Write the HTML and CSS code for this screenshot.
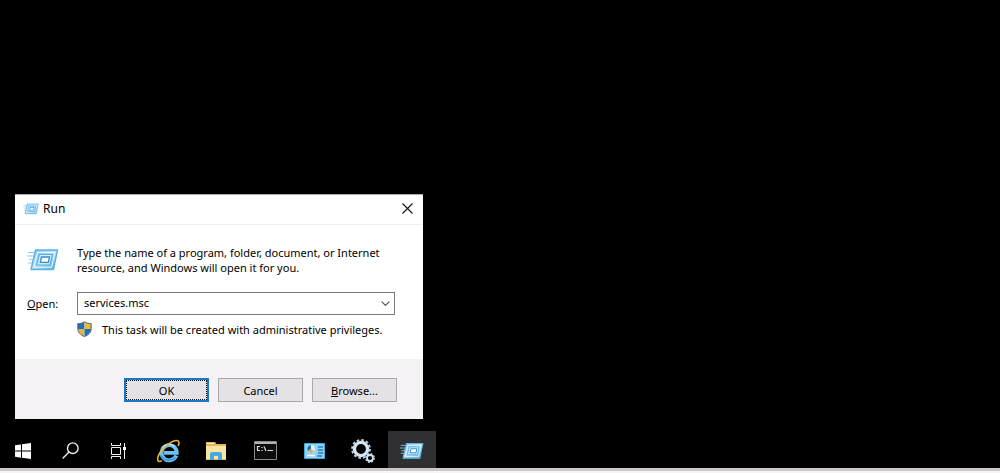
FILE: index.html
```html
<!DOCTYPE html>
<html lang="en">
<head>
<meta charset="utf-8">
<title>Run</title>
<link rel="stylesheet" href="styles.css">
</head>
<body>
<svg class="defs" aria-hidden="true">
  <defs>
    <linearGradient id="glass" x1="0" y1="0" x2="1" y2="1">
      <stop offset="0" stop-color="#7fc6ec"/><stop offset=".5" stop-color="#b5e0f6"/><stop offset="1" stop-color="#4aa6dd"/>
    </linearGradient>
    <symbol id="run" viewBox="0 0 32 24">
      <path d="M1 4.500h9M0 8h8M2 11.500h5M1 15h5" stroke="#8ccbed" stroke-width="1.100"/>
      <path d="M8.500 2H30.500L26.500 21.500H4z" fill="url(#glass)" stroke="#5fb3e2" stroke-width="1.400" stroke-linejoin="round"/>
      <path d="M10.500 4.300H28L24.600 19.200H6.900z" fill="none" stroke="#f0faff" stroke-width="1"/>
      <path d="M12.300 6.500H25.500L23 17H9.600z" fill="#d2eefa" stroke="#5aaee0" stroke-width="1.200"/>
      <path d="M14.500 9h8l-1.200 5.400h-8z" fill="#fff" stroke="#348fcd" stroke-width="1.300"/>
    </symbol>
  </defs>
</svg>
<main class="desktop">
  <form class="dialog" role="dialog" aria-labelledby="run-title">
    <header class="titlebar">
      <svg class="title-icon"><use href="#run"/></svg>
      <h1 class="title" id="run-title">Run</h1>
      <button class="close" type="button" aria-label="Close">
        <svg width="11" height="11" viewBox="0 0 11 11"><path d="M.5.5l10 10M10.500.5l-10 10" stroke="#111" stroke-width="1.100"/></svg>
      </button>
    </header>
    <div class="content">
      <svg class="run-icon"><use href="#run"/></svg>
      <p class="intro">Type the name of a program, folder, document, or Internet<br>resource, and Windows will open it for you.</p>
      <label class="open-label" for="open"><u>O</u>pen:</label>
      <div class="combo">
        <input class="combo-input" id="open" type="text" value="services.msc" spellcheck="false">
        <button class="combo-arrow" type="button" aria-label="Show list">
          <svg width="9" height="6" viewBox="0 0 9 6"><path d="M.7.7l3.800 3.800L8.300.7" fill="none" stroke="#555" stroke-width="1.200"/></svg>
        </button>
      </div>
      <p class="notice">
        <svg width="15" height="16" viewBox="0 0 15 16">
          <path d="M7.500 1C5.500 2.300 3.200 2.800 1 2.700V8h6.500z" fill="#1c6fc0"/>
          <path d="M7.500 1c2 1.300 4.300 1.800 6.500 1.700V8H7.500z" fill="#e8bd3a"/>
          <path d="M1 8h6.500v7.300C4 14 1.200 11.500 1 8z" fill="#e3b637"/>
          <path d="M14 8H7.500v7.300C11 14 13.800 11.500 14 8z" fill="#1c6fc0"/>
          <path d="M7.500.8C5.500 2.200 3.200 2.700.8 2.600V7.500c0 4 2.700 6.600 6.700 8 4-1.400 6.700-4 6.700-8V2.600C11.800 2.700 9.500 2.200 7.500.8z" fill="none" stroke="#4c5f70"/>
        </svg>
        <span>This task will be created with administrative privileges.</span>
      </p>
    </div>
    <footer class="actions">
      <button class="action action-default" type="button">OK</button>
      <button class="action" type="button">Cancel</button>
      <button class="action" type="button"><span><u>B</u>rowse...</span></button>
    </footer>
  </form>
</main>
<nav class="taskbar" aria-label="Taskbar">
  <div class="system">
    <button class="task" type="button" aria-label="Start">
      <svg width="16" height="16" viewBox="0 0 16 16" fill="#fff"><path d="M0 2.300l6-.9v6.200H0zM7 1.200L16 0v7.600H7zM0 8.500h6v6.200l-6-.9zM7 8.500h9V16l-9-1.200z"/></svg>
    </button>
    <button class="task" type="button" aria-label="Search">
      <svg width="17" height="17" viewBox="0 0 17 17" fill="none" stroke="#eee" stroke-width="1.400"><circle cx="10.800" cy="6.200" r="5.300"/><path d="M7 10L.6 16.400"/></svg>
    </button>
    <button class="task" type="button" aria-label="Task View">
      <svg width="17" height="16" viewBox="0 0 17 16" fill="none" stroke="#eee"><path d="M1.500 0v2.500h9V0M1.500 16v-2.500h9V16M14.500 0v16" /><path d="M1.500 4.500h9v7h-9z"/><path d="M13 4h3v3h-3z" fill="#fff" stroke="none"/></svg>
    </button>
  </div>
  <div class="pinned">
    <button class="task" type="button" aria-label="Internet Explorer">
      <svg width="23" height="24" viewBox="0 0 23 24" fill="none">
        <path d="M19.300 16.500A7.600 7.600 0 1 1 19.800 13.800H7" stroke="#69c3f2" stroke-width="3.800"/>
        <path d="M18.500 18.500A8.800 8.800 0 0 1 4.200 16.500" stroke="#2f97da" stroke-width="1.500"/>
        <path d="M5 9.500A8.300 8.300 0 0 1 18 7.500" stroke="#b5e6fb" stroke-width="1.400"/>
        <path d="M4.800 21.800C.5 24-.8 20.500 2.500 14.500 7 7.500 15 1.500 19.500 1.500c3 0 3 3 1.500 5.500" stroke="#e6b63c" stroke-width="1.600"/>
      </svg>
    </button>
    <button class="task" type="button" aria-label="File Explorer">
      <svg width="22" height="20" viewBox="0 0 22 20"><path d="M1 1h9l1.500 2H21v16H1z" fill="#e3b95c"/><path d="M2 2h7v1H2z" fill="#fff2b8"/><path d="M1 5h20v13H1z" fill="#fae6a2"/><path d="M5 19v-6.500l1.500-1.500h9l1.500 1.500V19h-4v-4H9v4z" fill="#4aa8de"/></svg>
    </button>
    <button class="task" type="button" aria-label="Command Prompt">
      <svg width="23" height="19" viewBox="0 0 23 19"><path d="M.5.5h22v18H.5z" fill="#0c0c0c" stroke="#888"/><path d="M1 1h21v2H1z" fill="#b4b4b4"/><path d="M6 5.500H3.500v4H6M8 6v1m0 2v1M10 5.500l2 4.500M13.500 9.500H19" fill="none" stroke="#ddd" stroke-width="1.200"/></svg>
    </button>
    <button class="task" type="button" aria-label="Control Panel">
      <svg width="21" height="16" viewBox="0 0 21 16"><path d="M.5.5h20v15H.5z" fill="#8fd3f3" stroke="#46a5da"/><circle cx="7" cy="6" r="3.900" fill="#e9f8ff"/><path d="M7 6V2.100A3.900 3.900 0 0 0 3.800 8.200z" fill="#1479bd"/><path d="M7 6l3.300 2A3.900 3.900 0 0 1 3.900 8.400z" fill="#dba868"/><path d="M14 4h5M14 7h5M14 10h5M13 13h5" stroke="#2b80b8" stroke-width="1.300"/><path d="M3 12.500h8" stroke="#fff" stroke-width="1.500"/></svg>
    </button>
    <button class="task" type="button" aria-label="Services">
      <svg width="24" height="24" viewBox="0 0 24 24" fill="none">
        <circle cx="10" cy="10" r="6.600" stroke="#d5e6f3" stroke-width="3.400"/><circle cx="10" cy="10" r="8.900" stroke="#bdd3e5" stroke-width="2" stroke-dasharray="2.600 2.060"/>
        <circle cx="19" cy="19" r="3" stroke="#d5e6f3" stroke-width="1.800"/><circle cx="19" cy="19" r="4.300" stroke="#bdd3e5" stroke-width="1.300" stroke-dasharray="1.900 1.480"/>
      </svg>
    </button>
    <button class="task task-active" type="button" aria-label="Run"><svg class="task-run"><use href="#run"/></svg></button>
  </div>
</nav>
<div class="screen-edge"></div>
</body>
</html>
```
FILE: styles.css
```css
* { box-sizing: border-box; }
body {
  display: flex;
  flex-direction: column;
  min-height: 100vh;
  margin: 0;
  background: #000;
  color: #000;
  font: 11px/15px "Noto Sans", "Open Sans", sans-serif;
}
button, input { font: inherit; color: inherit; }
button { display: flex; align-items: center; justify-content: center; padding: 0; border: 0; background: none; }
h1, p { margin: 0; }
svg { flex: none; }
.defs { position: absolute; width: 0; height: 0; }
.desktop { display: flex; flex: 1; align-items: flex-end; padding: 12px 15px; }
.dialog { width: 408px; max-width: 100%; border-top: 1px solid #aaa; background: #fff; }
.titlebar { display: flex; align-items: center; height: 30px; padding: 0 9px 2px 8px; border-bottom: 1px solid #eee; }
.title-icon { width: 16px; height: 12px; }
.title { flex: 1; margin-left: 4px; font-size: 12px; font-weight: 400; }
.close { width: 13px; height: 20px; }
.content {
  display: grid;
  grid-template-columns: 35px 1fr;
  column-gap: 15px;
  align-items: center;
  padding: 20px 28px 22px 12px;
}
.run-icon { width: 32px; height: 24px; }
.combo { display: flex; height: 23px; margin: 17px 0 6px; border: 1px solid #7a7a7a; }
.open-label { margin-top: 10px; }
.combo-input { flex: 1; min-width: 0; padding: 0 6px 2px; border: 0; outline: 0; background: none; }
.combo-arrow { width: 17px; }
.notice { display: flex; grid-column: 2; align-items: center; gap: 10px; height: 16px; }
.actions { display: flex; justify-content: flex-end; gap: 9px; padding: 19px 26px 17px; background: #f4f2f5; }
.action { width: 85px; height: 24px; border: 1px solid #aaa8ab; background: #e5e2e5; }
.action-default { border: 2px solid #1878c8; outline: 1px dotted #111; outline-offset: -3px; }
.taskbar { display: flex; gap: 1px; height: 37px; }
.system, .pinned { display: flex; }
.pinned { gap: 1px; }
.task { width: 48px; height: 37px; padding-top: 2px; }
.pinned .task:first-child { padding-left: 2px; }
.system .task:first-child { width: 46px; }
.task-active { background: #303033; }
.task-run { width: 24px; height: 18px; }
.screen-edge { height: 5px; border-top: 3px solid #cbc8c5; background: #f8f4f5; }
```
